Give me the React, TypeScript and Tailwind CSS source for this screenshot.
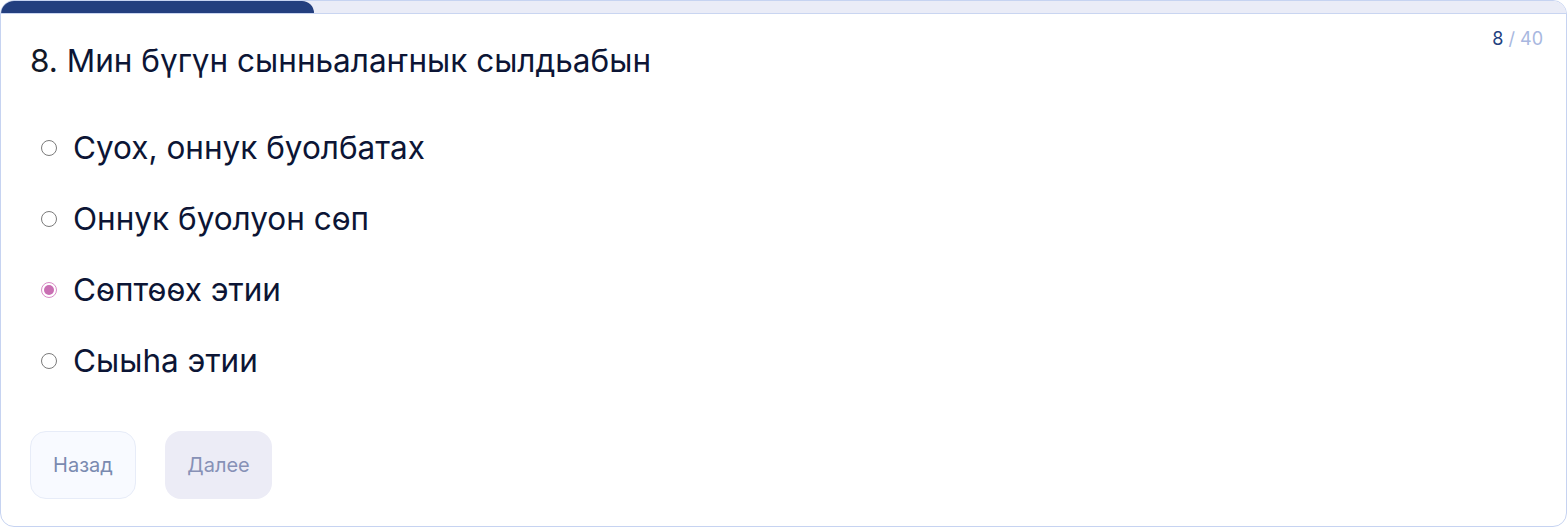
import { useState } from 'react';

const options = ['Суох, оннук буолбатах', 'Оннук буолуон сөп', 'Сөптөөх этии', 'Сыыһа этии'];

export default function App() {
  const [selected, setSelected] = useState(2);
  const current = 8;
  const total = 40;

  return (
    <div className="w-[1567px] h-[527px] bg-white" style={{ fontFamily: 'Inter, "Noto Sans", sans-serif' }}>
      <div className="h-full rounded-[14px] border border-[#c6d3f1] overflow-hidden flex flex-col">
        <div className="h-[13px] bg-[#eaecf7] border-b border-[#c9d5f1] flex">
          <div className="h-full bg-[#233f7f] rounded-tr-[12px]" style={{ width: `${(current / total) * 100}%` }} />
        </div>

        <div className="px-[29px] flex-1 flex flex-col">
          <div className="flex justify-between items-start">
            <h1 className="mt-[28px] text-[31.5px] leading-[38px] text-[#0c1535] font-normal">
              <span className="text-[#111827]">{current}.</span> Мин бүгүн сынньалаҥнык сылдьабын
            </h1>
            <div className="mt-[13px] mr-[-6px] text-[18px] leading-[24px]">
              <span className="text-[#233f7f]">{current}</span>
              <span className="text-[#a8b7e0]"> / {total}</span>
            </div>
          </div>

          <div className="mt-[48px] flex flex-col gap-[31px]">
            {options.map((opt, i) => (
              <label key={opt} className="flex items-center gap-[16px] h-[40px] pl-[11px] cursor-pointer" onClick={() => setSelected(i)}>
                {selected === i ? (
                  <span className="w-[16px] h-[16px] rounded-full border-[1.5px] border-[#d98cc6] flex items-center justify-center">
                    <span className="w-[10px] h-[10px] rounded-full bg-[#c96fb3]" />
                  </span>
                ) : (
                  <span className="w-[16px] h-[16px] rounded-full border-[1.5px] border-[#7b7b7b]" />
                )}
                <span className="text-[31.5px] leading-[40px] text-[#0c1535]">{opt}</span>
              </label>
            ))}
          </div>

          <div className="mt-[50px] flex gap-[29px]">
            <button type="button" className="w-[106px] h-[68px] rounded-[16px] bg-[#f8faff] border border-[#e7ecf8] text-[20px] text-[#7a8ab0]">
              Назад
            </button>
            <button type="button" className="w-[107px] h-[68px] rounded-[16px] bg-[#ececf6] text-[20px] text-[#8791b6]">
              Далее
            </button>
          </div>
        </div>
      </div>
    </div>
  );
}
